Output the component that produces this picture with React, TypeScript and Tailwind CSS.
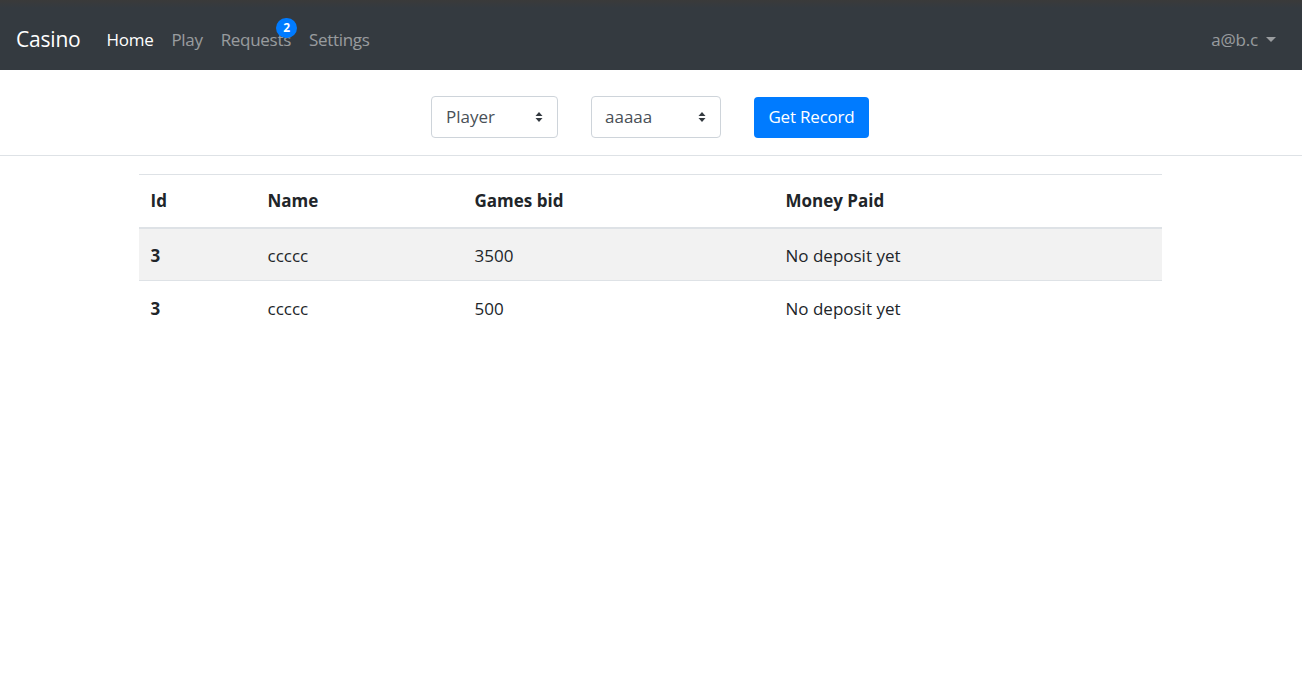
import React from "react";

function Caret() {
  return (
    <svg width="8" height="12" viewBox="0 0 8 12" className="ml-auto">
      <path d="M4 1 L7.5 5 H0.5 Z" fill="#343a40" />
      <path d="M4 11 L7.5 7 H0.5 Z" fill="#343a40" />
    </svg>
  );
}

export default function App() {
  const font = { fontFamily: '"Open Sans", "Noto Sans", sans-serif' };
  const rows = [
    { id: "3", name: "ccccc", bid: "3500", paid: "No deposit yet" },
    { id: "3", name: "ccccc", bid: "500", paid: "No deposit yet" },
  ];
  return (
    <div className="min-h-[677px] bg-white text-[#212529]" style={font}>
      <nav className="h-[70px] bg-[#343a40] flex flex-col">
        <div className="h-[8px] bg-gradient-to-b from-[#3a3a3a] to-[#343a40]" />
        <div className="flex-1 flex items-center px-4 pt-[1px]">
          <span className="text-[21px] text-white mr-[26px] tracking-[-0.2px]">Casino</span>
          <div className="flex items-center gap-[18px] text-[17px] tracking-[-0.3px]">
            <span className="text-white">Home</span>
            <span className="text-[rgba(255,255,255,0.5)]">Play</span>
            <span className="relative text-[rgba(255,255,255,0.5)]">
              Requests
              <span className="absolute -top-[9px] -right-[6px] w-[21px] h-[20px] rounded-full bg-[#007bff] text-white text-[12px] font-bold flex items-center justify-center leading-none">
                2
              </span>
            </span>
            <span className="text-[rgba(255,255,255,0.5)]">Settings</span>
          </div>
          <div className="ml-auto flex items-center text-[17px] text-[rgba(255,255,255,0.5)] tracking-[-0.2px] mr-[10px]">
            a@b.c
            <svg width="10" height="6" viewBox="0 0 10 6" className="ml-[8px] mt-[1px]">
              <path d="M0 0 H10 L5 5 Z" fill="rgba(255,255,255,0.5)" />
            </svg>
          </div>
        </div>
      </nav>

      <div className="h-[86px] border-b border-[#dee2e6] flex items-start justify-center pt-[26px]">
        <div className="flex items-center mr-[2px]">
          <div className="w-[127px] h-[42px] border border-[#ced4da] rounded-[4px] flex items-center pl-[14px] pr-[14px] text-[17px] text-[#495057]">
            Player
            <Caret />
          </div>
          <div className="w-[130px] h-[42px] ml-[33px] border border-[#ced4da] rounded-[4px] flex items-center pl-[13px] pr-[14px] text-[17px] text-[#495057]">
            aaaaa
            <Caret />
          </div>
          <button className="ml-[33px] w-[115px] h-[41px] bg-[#007bff] text-white rounded-[4px] text-[17px] tracking-[-0.2px] flex items-center justify-center">
            Get Record
          </button>
        </div>
      </div>

      <div className="pt-[18px] pr-[2px] flex justify-center">
        <table className="w-[1023px] border-collapse text-[17px]">
          <thead>
            <tr className="h-[53px]">
              <th className="w-[117px] text-left font-bold px-3 border-t border-[#dee2e6] border-b-2 border-b-[#dee2e6]">Id</th>
              <th className="w-[207px] text-left font-bold px-3 border-t border-[#dee2e6] border-b-2 border-b-[#dee2e6]">Name</th>
              <th className="w-[311px] text-left font-bold px-3 border-t border-[#dee2e6] border-b-2 border-b-[#dee2e6]">Games bid</th>
              <th className="text-left font-bold px-3 border-t border-[#dee2e6] border-b-2 border-b-[#dee2e6]">Money Paid</th>
            </tr>
          </thead>
          <tbody>
            {rows.map((r, i) => (
              <tr key={i} className={`h-[53px] ${i === 0 ? "bg-[#f2f2f2]" : ""}`}>
                <td className={`px-3 pt-[3px] font-bold ${i === 0 ? "border-b border-[#dee2e6]" : ""}`}>{r.id}</td>
                <td className={`px-3 pt-[3px] ${i === 0 ? "border-b border-[#dee2e6]" : ""}`}>{r.name}</td>
                <td className={`px-3 pt-[3px] ${i === 0 ? "border-b border-[#dee2e6]" : ""}`}>{r.bid}</td>
                <td className={`px-3 pt-[3px] ${i === 0 ? "border-b border-[#dee2e6]" : ""}`}>{r.paid}</td>
              </tr>
            ))}
          </tbody>
        </table>
      </div>
    </div>
  );
}
